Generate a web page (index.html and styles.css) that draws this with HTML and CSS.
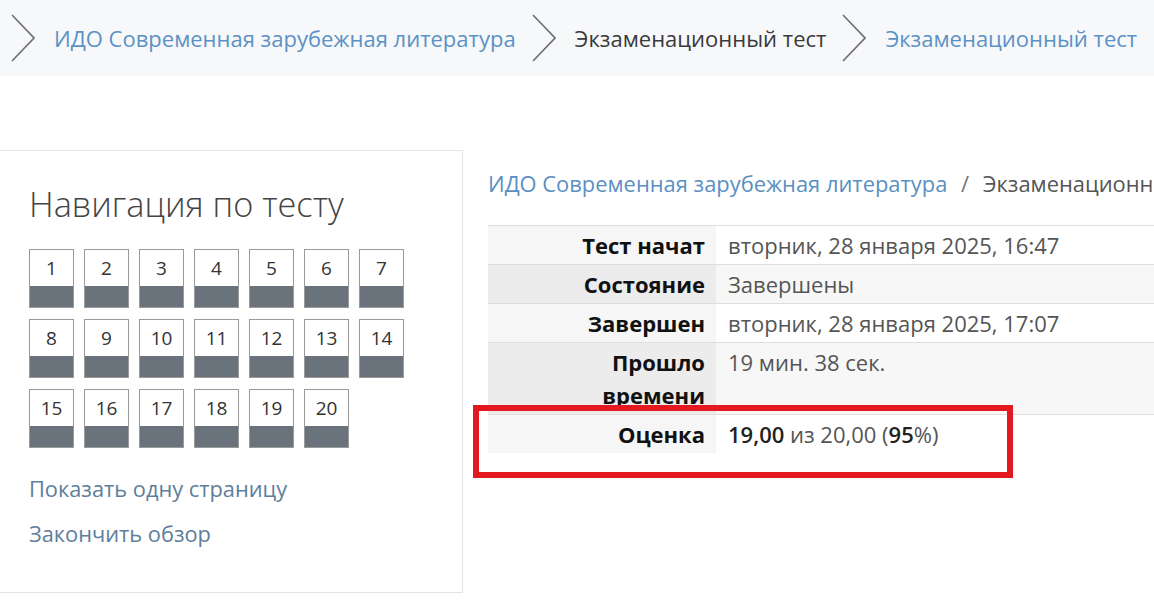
FILE: index.html
```html
<!DOCTYPE html>
<html lang="ru">
<head>
  <meta charset="UTF-8">
  <meta name="viewport" content="width=device-width, initial-scale=1">
  <title>Экзаменационный тест</title>
  <link rel="stylesheet" href="styles.css">
</head>
<body>

<nav class="crumbs">
  <div class="crumb">
    <svg class="chevron" viewBox="0 0 24 48"><polyline points="1,1 23,24 1,47"/></svg>
    <a href="#" class="link">ИДО Современная зарубежная литература</a>
  </div>
  <div class="crumb">
    <svg class="chevron" viewBox="0 0 24 48"><polyline points="1,1 23,24 1,47"/></svg>
    <span class="current">Экзаменационный тест</span>
  </div>
  <div class="crumb">
    <svg class="chevron" viewBox="0 0 24 48"><polyline points="1,1 23,24 1,47"/></svg>
    <a href="#" class="link">Экзаменационный тест</a>
  </div>
</nav>

<div class="page">
  <aside class="quiz-nav">
    <h2>Навигация по тесту</h2>
    <div class="qgrid">
      <a class="qbtn" href="#"><span class="num">1</span><span class="state"></span></a>
      <a class="qbtn" href="#"><span class="num">2</span><span class="state"></span></a>
      <a class="qbtn" href="#"><span class="num">3</span><span class="state"></span></a>
      <a class="qbtn" href="#"><span class="num">4</span><span class="state"></span></a>
      <a class="qbtn" href="#"><span class="num">5</span><span class="state"></span></a>
      <a class="qbtn" href="#"><span class="num">6</span><span class="state"></span></a>
      <a class="qbtn" href="#"><span class="num">7</span><span class="state"></span></a>
      <a class="qbtn" href="#"><span class="num">8</span><span class="state"></span></a>
      <a class="qbtn" href="#"><span class="num">9</span><span class="state"></span></a>
      <a class="qbtn" href="#"><span class="num">10</span><span class="state"></span></a>
      <a class="qbtn" href="#"><span class="num">11</span><span class="state"></span></a>
      <a class="qbtn" href="#"><span class="num">12</span><span class="state"></span></a>
      <a class="qbtn" href="#"><span class="num">13</span><span class="state"></span></a>
      <a class="qbtn" href="#"><span class="num">14</span><span class="state"></span></a>
      <a class="qbtn" href="#"><span class="num">15</span><span class="state"></span></a>
      <a class="qbtn" href="#"><span class="num">16</span><span class="state"></span></a>
      <a class="qbtn" href="#"><span class="num">17</span><span class="state"></span></a>
      <a class="qbtn" href="#"><span class="num">18</span><span class="state"></span></a>
      <a class="qbtn" href="#"><span class="num">19</span><span class="state"></span></a>
      <a class="qbtn" href="#"><span class="num">20</span><span class="state"></span></a>
    </div>
    <div class="nav-links">
      <a href="#">Показать одну страницу</a>
      <a href="#">Закончить обзор</a>
    </div>
  </aside>

  <main class="content">
    <div class="path">
      <a href="#">ИДО Современная зарубежная литература</a>
      <span class="sep">/</span>
      <span>Экзаменационный тест</span>
    </div>

    <div class="summary-wrap">
      <table class="summary">
        <tr>
          <th>Тест начат</th>
          <td>вторник, 28 января 2025, 16:47</td>
        </tr>
        <tr>
          <th>Состояние</th>
          <td>Завершены</td>
        </tr>
        <tr>
          <th>Завершен</th>
          <td>вторник, 28 января 2025, 17:07</td>
        </tr>
        <tr>
          <th>Прошло времени</th>
          <td>19 мин. 38 сек.</td>
        </tr>
        <tr>
          <th>Оценка</th>
          <td><b>19,00</b> из 20,00 (<b>95</b>%)</td>
        </tr>
      </table>
      <div class="highlight"></div>
    </div>
  </main>
</div>

</body>
</html>
```

FILE: styles.css
```css
* {
  box-sizing: border-box;
  margin: 0;
  padding: 0;
}

body {
  font-family: 'Open Sans', 'DejaVu Sans', sans-serif;
  background: #fff;
  color: #333;
  overflow: hidden;
}

a {
  text-decoration: none;
}

/* top breadcrumb bar */
.crumbs {
  height: 76px;
  background: #f7f8fa;
  display: flex;
  align-items: center;
  padding-left: 11px;
  gap: 16px;
  white-space: nowrap;
}

.crumb {
  display: flex;
  align-items: center;
  gap: 19px;
  font-size: 22px;
}

.chevron {
  width: 24px;
  height: 48px;
  fill: none;
  stroke: #707070;
  stroke-width: 1.7;
}

.crumbs .link {
  color: #5b92c6;
}

.crumbs .current {
  color: #3a3a3a;
}

/* page body */
.page {
  display: flex;
  align-items: flex-start;
  margin-top: 74px;
  gap: 25px;
}

.quiz-nav {
  flex: none;
  width: 483px;
  margin-left: -20px;
  border: 1px solid #e4e4e4;
  padding: 32px 0 44px 48px;
}

.quiz-nav h2 {
  font-size: 34.3px;
  font-weight: 300;
  color: #444;
  line-height: 42px;
}

.qgrid {
  display: grid;
  grid-template-columns: repeat(7, 45px);
  column-gap: 10px;
  row-gap: 11px;
  margin-top: 24px;
}

.qbtn {
  display: flex;
  flex-direction: column;
  height: 59px;
  border: 1px solid #9a9a9a;
  color: #333;
}

.qbtn .num {
  height: 36px;
  background: #fff;
  font-size: 19px;
  line-height: 36px;
  text-align: center;
}

.qbtn .state {
  flex: 1;
  background: #6a737b;
}

.nav-links {
  display: flex;
  flex-direction: column;
  gap: 16px;
  margin-top: 26px;
}

.nav-links a {
  font-size: 21.8px;
  line-height: 29px;
  color: #5d7e9c;
}

/* right column */
.content {
  flex: none;
  width: 800px;
  padding-top: 20px;
}

.path {
  font-size: 21.9px;
  line-height: 28px;
  white-space: nowrap;
  color: #555;
}

.path a {
  color: #5b8fc2;
}

.path .sep {
  margin: 0 8px;
  color: #777;
}

.summary-wrap {
  position: relative;
  margin-top: 27px;
}

.summary {
  width: 100%;
  border-collapse: collapse;
  font-size: 22px;
  line-height: 33px;
}

.summary th,
.summary td {
  border-top: 1px solid #dedede;
  padding: 3px 12px 2px;
  vertical-align: top;
}

.summary th {
  width: 228px;
  text-align: right;
  padding-left: 40px;
  padding-right: 11px;
  color: #111;
  font-weight: 700;
  background: #f6f6f6;
}

.summary td {
  color: #555;
  background: #fff;
}

.summary tr:nth-child(even) th {
  background: #ececec;
}

.summary tr:nth-child(even) td {
  background: #f7f7f7;
}

.summary td b {
  font-weight: 600;
  color: #222;
}

/* red frame drawn over the grade row */
.highlight {
  position: absolute;
  left: -15px;
  top: 180px;
  width: 540px;
  height: 73px;
  border: 6px solid #e3191f;
}
```
